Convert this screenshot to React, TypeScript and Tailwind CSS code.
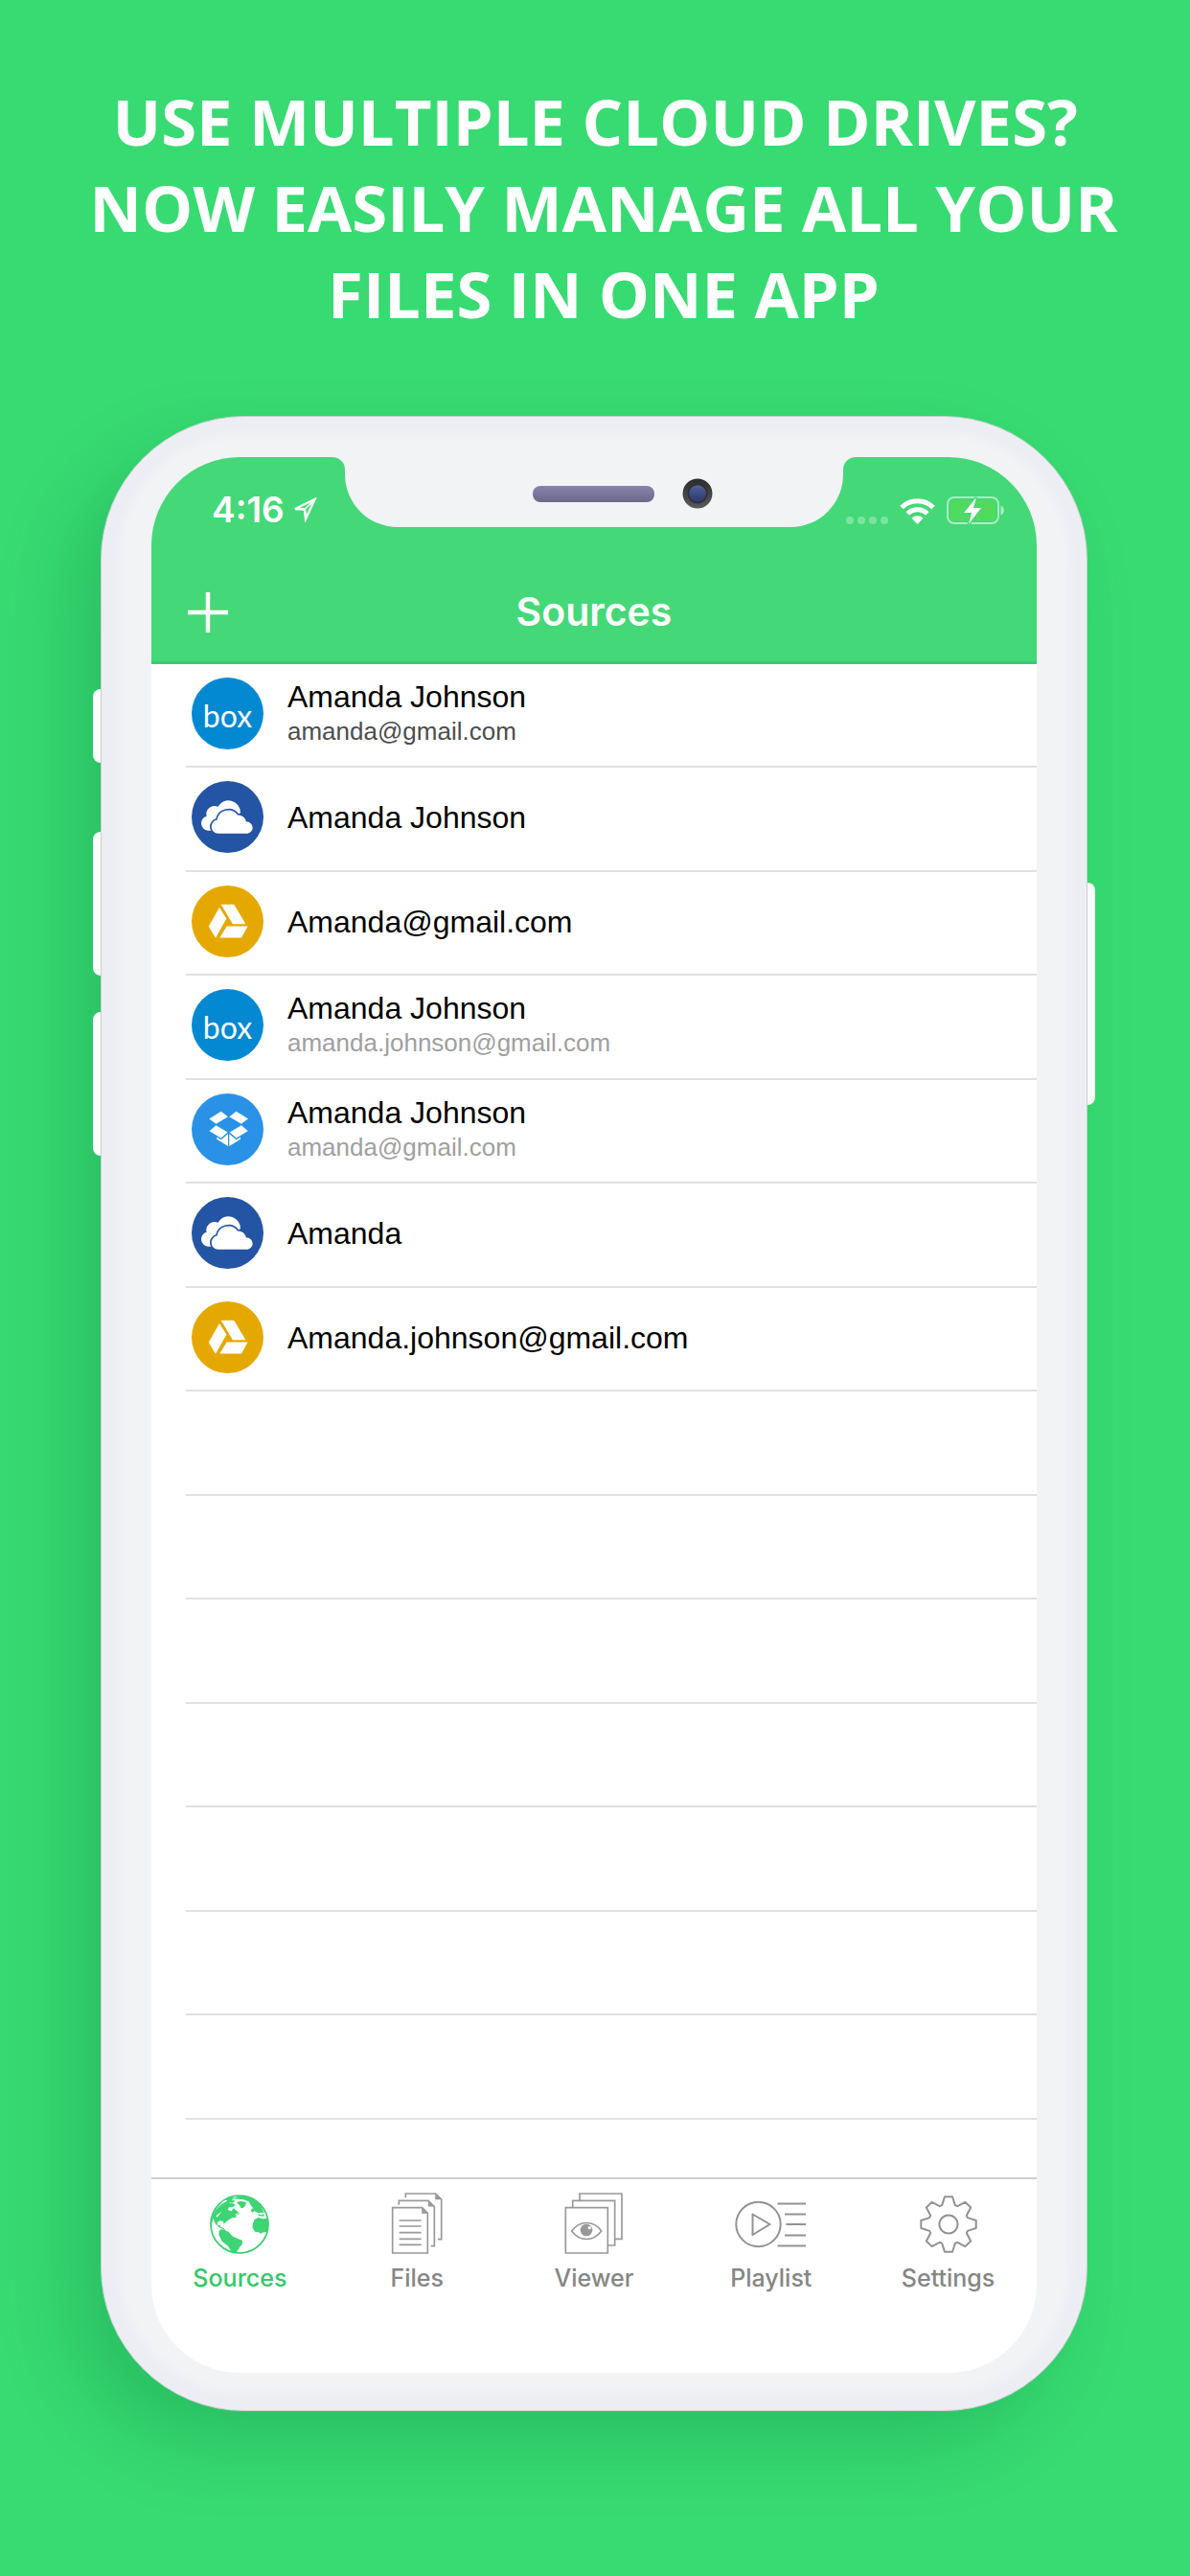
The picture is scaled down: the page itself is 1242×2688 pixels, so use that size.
import type { ReactNode } from "react";

type Provider = "box" | "onedrive" | "drive" | "dropbox";

interface Account {
  id: number;
  provider: Provider;
  name: string;
  email?: string;
  emailTone?: "dark" | "light";
}

interface Tab {
  label: string;
  icon: ReactNode;
  active?: boolean;
}

const accounts: Account[] = [
  { id: 1, provider: "box", name: "Amanda Johnson", email: "amanda@gmail.com", emailTone: "dark" },
  { id: 2, provider: "onedrive", name: "Amanda Johnson" },
  { id: 3, provider: "drive", name: "Amanda@gmail.com" },
  { id: 4, provider: "box", name: "Amanda Johnson", email: "amanda.johnson@gmail.com", emailTone: "light" },
  { id: 5, provider: "dropbox", name: "Amanda Johnson", email: "amanda@gmail.com", emailTone: "light" },
  { id: 6, provider: "onedrive", name: "Amanda" },
  { id: 7, provider: "drive", name: "Amanda.johnson@gmail.com" }
];

const emptyRows = [8, 9, 10, 11, 12, 13, 14];

const providerColors: Record<Provider, string> = {
  box: "bg-[#0389d1]",
  onedrive: "bg-[#2455a4]",
  drive: "bg-[#e5a800]",
  dropbox: "bg-[#2992e6]"
};

// Eight teeth, four points each
const gearPoints = Array.from({ length: 8 })
  .flatMap((_, tooth) =>
    [
      [-19, 21],
      [-8, 29],
      [8, 29],
      [19, 21]
    ].map(([offset, radius]) => {
      const angle = ((tooth * 45 + offset - 90) * Math.PI) / 180;
      return `${(30 + radius * Math.cos(angle)).toFixed(2)},${(30 + radius * Math.sin(angle)).toFixed(2)}`;
    })
  )
  .join(" ");

function ProviderLogo({ provider }: { provider: Provider }) {
  if (provider === "box") {
    return <span className="pt-1 font-[Lato,sans-serif] text-[32px] leading-none text-white">box</span>;
  }

  return (
    <svg viewBox="0 0 75 75" className="h-full w-full fill-white" aria-hidden="true">
      {provider === "onedrive" && (
        <>
          <path d="M17 51.7A7.6 7.6 0 0 1 15.6 36.8A8.6 8.6 0 0 1 27.4 26.8A12.6 12.6 0 0 1 51 33L40 42L26 51.7Z" />
          <path
            d="M27.5 54.7A7.1 7.1 0 0 1 26.6 40.6A11.9 11.9 0 0 1 48 35.4A8.8 8.8 0 0 1 57 42.6A6.1 6.1 0 0 1 58.5 54.7Z"
            stroke="#2455a4"
            strokeWidth="3.4"
            paintOrder="stroke"
          />
        </>
      )}
      {provider === "drive" && (
        <>
          <path d="M30.7 19.7H44.2L56.4 40.2H42.9Z" />
          <path d="M29 22.9L36.4 34.6L25 54.8L17.7 42.8Z" />
          <path d="M36.7 42.4H58.6L52 54.5H29.3Z" />
        </>
      )}
      {provider === "dropbox" && (
        <>
          <path d="M30.7 18.8L38 24.3L25.5 31.7L18.3 26.4Z" />
          <path d="M46.5 18.8L59 26.4L51.8 31.7L39.3 24.3Z" />
          <path d="M25.5 33.2L37.6 40.6L30.7 46.5L18.5 39.2Z" />
          <path d="M51.8 33.2L39.7 40.6L46.6 46.5L58.8 39.2Z" />
          <path d="M26.3 45.6L30.8 48.3L38 42.2V55L26.3 47.7Z" />
          <path d="M51 45.6L46.5 48.3L39.3 42.2V55L51 47.7Z" />
        </>
      )}
    </svg>
  );
}

function SourcesIcon() {
  return (
    <svg viewBox="54 26 186 186" className="h-[62px] w-[62px] fill-[#3dd574]" aria-hidden="true">
      <circle cx="147" cy="119" r="90" fill="none" stroke="#35cb6c" strokeWidth="5" />
      <path d="M58 112L62 94L72 74L90 56L112 44L118 54L128 54L134 60L124 66L114 66L110 74L122 78L128 68L142 80L146 87L134 92L138 98L124 98L112 106L104 112L98 118L96 110L84 108L77 114L79 122L86 121L88 128L98 131L106 142L96 135L84 129L72 118L64 100L61 116Z" />
      <path d="M104 42L124 32L130 38L122 42L134 46L124 52L112 50Z" />
      <path d="M138 50L150 46L168 50L166 60L158 68L151 68L147 60Z" />
      <path d="M124 38L150 30L176 34L196 44L208 54L220 74L224 84L216 82L206 84L194 78L186 82L182 74L190 68L182 60L176 48L160 42Z" />
      <path d="M205 86L214 90L224 87L223 94L207 93Z" />
      <path d="M194 104L206 98L222 102L236 100L238 124L233 144L222 144L214 148L206 144L195 142L188 130L188 120Z" />
      <path d="M83 140L90 134L112 142L126 157L156 170L155 182L145 194L138 206L122 206L112 188L92 172L82 152Z" />
      <path d="M74 92L92 78L76 98ZM132 88L144 84L138 90Z" fill="#ffffff" />
    </svg>
  );
}

function FilesIcon() {
  return (
    <svg viewBox="771 145 162 195" className="h-[65px] w-[54px] fill-none stroke-[#999999] stroke-[5px]" aria-hidden="true">
      <path d="M776 192H869L886 209V334H776Z" />
      <path d="M796 183V170H888L907 189V312H896" />
      <path d="M817 161V148H911L929 166V291H918" />
      <path d="M868 192V210H886ZM888 170V188H907ZM910 148V166H929Z" className="fill-[#999999]" strokeWidth="1" />
      <path d="M797 232H866M797 250H866M797 270H866M797 290H866M797 308H866" />
    </svg>
  );
}

function ViewerIcon() {
  return (
    <svg viewBox="1317 145 183 195" className="h-[65px] w-[61px] fill-none stroke-[#999999] stroke-[5px]" aria-hidden="true">
      <path d="M1321 192H1453V334H1321Z" />
      <path d="M1343 192V170H1475V310H1454" />
      <path d="M1365 170V148H1497V290H1475" />
      <path d="M1340 265C1365 231 1408 231 1433 265C1408 299 1365 299 1340 265Z" />
      <circle cx="1386" cy="262" r="19" className="fill-[#999999] stroke-none" />
      <circle cx="1396" cy="255" r="5" className="fill-white stroke-none" />
    </svg>
  );
}

function PlaylistIcon() {
  return (
    <svg
      viewBox="0 0 75 50"
      className="h-[50px] w-[75px] fill-none stroke-[#929292] stroke-2"
      strokeLinejoin="round"
      aria-hidden="true"
    >
      <circle cx="24.5" cy="25" r="23.2" />
      <path d="M18.5 14.5L36.5 25L18.5 36Z" />
      <path d="M44.5 3.5H74M52 14.5H74M53.5 25H74M52 36.5H74M44.5 47.5H74" />
    </svg>
  );
}

function SettingsIcon() {
  return (
    <svg
      viewBox="0 0 60 60"
      className="h-[60px] w-[60px] fill-none stroke-[#929292] stroke-2"
      strokeLinejoin="round"
      aria-hidden="true"
    >
      <polygon points={gearPoints} />
      <circle cx="30" cy="30" r="9.6" />
    </svg>
  );
}

function WifiIcon() {
  return (
    <svg viewBox="0 0 37 29" className="h-[29px] w-[37px]" aria-hidden="true">
      <g fill="none" stroke="#ffffff" strokeWidth="5">
        <path d="M2 11.5A23.5 23.5 0 0 1 35 11.5" />
        <path d="M8.2 18A14.5 14.5 0 0 1 28.8 18" />
      </g>
      <path d="M18.5 29L12.5 22.8A8.6 8.6 0 0 1 24.5 22.8Z" fill="#ffffff" />
    </svg>
  );
}

function BatteryIcon() {
  return (
    <svg viewBox="0 0 60 30" className="h-[30px] w-[60px]" aria-hidden="true">
      <rect x="1" y="2" width="53" height="27" rx="7" fill="none" stroke="#ffffff" strokeOpacity="0.55" strokeWidth="2" />
      <rect x="4" y="5" width="47" height="21" rx="4" fill="#51db5c" />
      <path d="M56.5 10.5C61 12 61 19 56.5 20.5Z" fill="#ffffff" fillOpacity="0.55" />
      <path d="M31 2L18 18H26L23 30L36 13H28Z" fill="#ffffff" stroke="#45d878" strokeWidth="3" paintOrder="stroke" />
    </svg>
  );
}

function Notch() {
  return (
    <div className="absolute left-1/2 top-0 h-[73px] w-[546px] -translate-x-1/2">
      <svg viewBox="0 0 546 73" className="h-full w-full" aria-hidden="true">
        <defs>
          <linearGradient id="speaker" x1="0" y1="0" x2="0" y2="1">
            <stop offset="0" stopColor="#8883ae" />
            <stop offset="1" stopColor="#6c6887" />
          </linearGradient>
          <linearGradient id="lens-ring" x1="0" y1="0" x2="0" y2="1">
            <stop offset="0" stopColor="#2b2b2f" />
            <stop offset="1" stopColor="#5a5a5a" />
          </linearGradient>
          <linearGradient id="lens" x1="0" y1="0" x2="0" y2="1">
            <stop offset="0" stopColor="#4f659c" />
            <stop offset="1" stopColor="#2b3769" />
          </linearGradient>
        </defs>
        <path
          d="M0 0A13 13 0 0 1 13 13V18A55 55 0 0 0 68 73H478A55 55 0 0 0 533 18V13A13 13 0 0 1 546 0Z"
          fill="#f2f3f5"
        />
        <rect x="209" y="30" width="127" height="17" rx="8" fill="url(#speaker)" />
        <circle cx="381" cy="38" r="15.5" fill="url(#lens-ring)" />
        <circle cx="381" cy="38" r="10.5" fill="#2f3036" />
        <circle cx="381" cy="38" r="8.8" fill="url(#lens)" />
      </svg>
    </div>
  );
}

function StatusBar() {
  return (
    <div className="flex h-[110px] items-center justify-between pl-[63px] pr-[34px]">
      <div className="flex items-center gap-2 text-white">
        <span className="text-[37px] font-semibold">4:16</span>
        <svg viewBox="0 0 26 26" className="h-[26px] w-[26px]" aria-hidden="true">
          <path d="M3 12L23.5 2L14 22.5L13 12.5Z" fill="none" stroke="#ffffff" strokeWidth="2.4" />
          <path d="M13 12.5L23 2.5" stroke="#ffffff" strokeWidth="1.5" />
        </svg>
      </div>
      <div className="flex items-end gap-3">
        <div className="flex gap-1">
          {[1, 2, 3, 4].map((bar) => (
            <span key={bar} className="h-2 w-2 rounded-full bg-white/30" />
          ))}
        </div>
        <WifiIcon />
        <BatteryIcon />
      </div>
    </div>
  );
}

function AccountRow({ account }: { account: Account }) {
  return (
    <li className="h-[108px] border-b-2 border-[#e1e1e1] even:h-[109px]">
      <button type="button" className="flex w-full items-center gap-[25px] pl-1.5 pt-3.5 text-left">
        <span
          className={`flex h-[75px] w-[75px] shrink-0 items-center justify-center rounded-full ${providerColors[account.provider]}`}
        >
          <ProviderLogo provider={account.provider} />
        </span>
        <span className="flex flex-col">
          <span className="text-[32px] leading-9 text-black">{account.name}</span>
          {account.email && (
            <span
              className={`text-[26px] leading-9 ${account.emailTone === "dark" ? "text-[#4d4d4d]" : "text-[#a0a0a0]"}`}
            >
              {account.email}
            </span>
          )}
        </span>
      </button>
    </li>
  );
}

const tabs: Tab[] = [
  { label: "Sources", icon: <SourcesIcon />, active: true },
  { label: "Files", icon: <FilesIcon /> },
  { label: "Viewer", icon: <ViewerIcon /> },
  { label: "Playlist", icon: <PlaylistIcon /> },
  { label: "Settings", icon: <SettingsIcon /> }
];

export default function App() {
  return (
    <main className="min-h-screen overflow-hidden bg-[#38da72] pb-[172px] pl-[105px] pr-[107px] pt-[81px] font-[Inter,sans-serif]">
      <h1 className="-mx-20 pl-5 text-center font-['Open_Sans',sans-serif] text-[67px] font-bold leading-[90px] text-white">
        USE MULTIPLE CLOUD DRIVES?&nbsp;
        <br />
        NOW EASILY MANAGE ALL YOUR
        <br />
        FILES IN ONE APP
      </h1>

      <div className="relative mt-[83px] rounded-[150px] shadow-[-32px_36px_72px_rgba(0,120,60,0.25)]">
        <span className="absolute -left-2 top-[285px] h-[77px] w-4 rounded-l-lg bg-[#fbfcfc]" />
        <span className="absolute -left-2 top-[434px] h-[150px] w-4 rounded-l-lg bg-[#fbfcfc]" />
        <span className="absolute -left-2 top-[622px] h-[150px] w-4 rounded-l-lg bg-[#fbfcfc]" />
        <span className="absolute -right-2 top-[487px] h-[232px] w-4 rounded-r-lg bg-[#fbfcfc]" />

        <div className="relative rounded-[150px] border border-[#c9ced0] bg-[#f2f3f5] px-[52px] pb-[39px] pt-[42px] shadow-[inset_0_0_8px_18px_#edeef3]">
          <div className="relative overflow-hidden rounded-[92px] bg-white">
            <header className="border-b-[3px] border-[#3cc775] bg-[#45d878]">
              <StatusBar />
              <div className="grid h-[103px] grid-cols-3 items-center px-[38px]">
                <button type="button" aria-label="Add source" className="justify-self-start">
                  <svg viewBox="0 0 42 42" className="h-[42px] w-[42px]" aria-hidden="true">
                    <path d="M21 0V42M0 21H42" stroke="#ffffff" strokeWidth="4.5" />
                  </svg>
                </button>
                <h2 className="text-center text-[41px] font-semibold text-white">Sources</h2>
              </div>
            </header>

            <ul className="ml-[36px] font-['Liberation_Sans',sans-serif]">
              {accounts.map((account) => (
                <AccountRow key={account.id} account={account} />
              ))}
              {emptyRows.map((row) => (
                <li key={row} className="h-[108px] border-b-2 border-[#e1e1e1] even:h-[109px]" />
              ))}
            </ul>

            <nav className="mt-[60px] grid h-[204px] grid-cols-5 items-start border-t-2 border-[#cfcfcf] pt-3.5">
              {tabs.map((tab) => (
                <button key={tab.label} type="button" className="flex flex-col items-center gap-2">
                  <span className="flex h-[65px] items-center">{tab.icon}</span>
                  <span
                    className={`text-[25px] font-medium leading-8 ${tab.active ? "text-[#35c86c]" : "text-[#868686]"}`}
                  >
                    {tab.label}
                  </span>
                </button>
              ))}
            </nav>
            <Notch />
          </div>
        </div>
      </div>
    </main>
  );
}
